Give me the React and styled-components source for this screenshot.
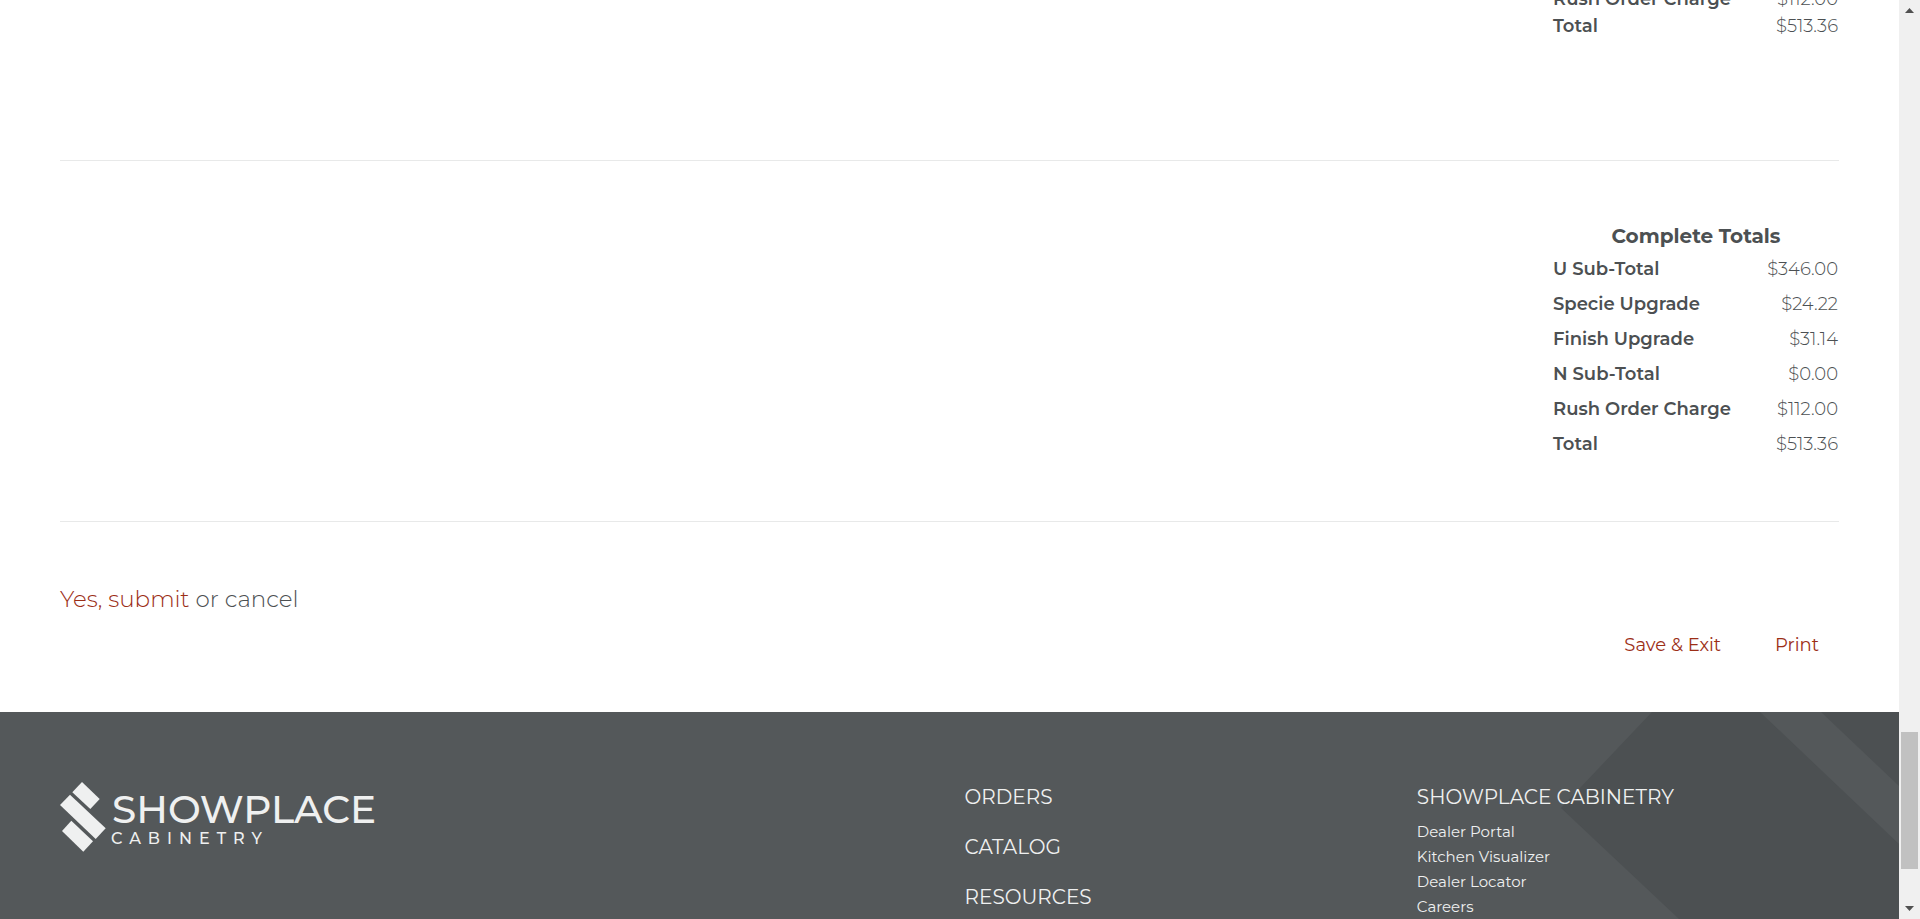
import styled, { createGlobalStyle } from 'styled-components';

const GlobalStyle = createGlobalStyle`
  * {
    box-sizing: border-box;
  }

  body {
    margin: 0;
    background: #fff;
    color: #4c5052;
    font-family: Montserrat, Inter, 'Open Sans', sans-serif;
    font-size: 18px;
    font-weight: 300;
  }

  a {
    color: inherit;
    text-decoration: none;
  }
`;

const Screen = styled.div`
  display: grid;
  grid-template-columns: 1fr 21px;
  height: 100vh;
  overflow: hidden;
`;

const Page = styled.div`
  display: flex;
  flex-direction: column;
  min-width: 0;
  overflow: hidden;
`;

const Main = styled.main`
  padding: 0 60px 55px;
`;

const Section = styled.section`
  display: flex;
  justify-content: flex-end;
  padding: 60px 0 59px;
  border-bottom: 1px solid #e8e9e9;
`;

// the order page is scrolled down, so the first totals start above the fold
const OrderSection = styled(Section)`
  margin-top: -14px;
  padding: 0 0 120px;
`;

const TotalsTable = styled.table`
  width: 286px;
  border-collapse: collapse;

  caption {
    padding-bottom: 1px;
    font-size: 20px;
    font-weight: 700;
    line-height: 30px;
  }

  th,
  td {
    padding: 0;
    line-height: ${({ $rowHeight }) => $rowHeight}px;
  }

  th {
    font-weight: 600;
    text-align: left;
  }

  td {
    padding-right: 1px;
    text-align: right;
  }
`;

const Confirm = styled.p`
  margin: 60px 0 17px;
  font-size: 23px;
  line-height: 34px;
`;

const SubmitLink = styled.a`
  && {
    color: #9c2e16;
  }
`;

const Actions = styled.div`
  display: flex;
  justify-content: flex-end;
  gap: 54px;
  padding-right: 20px;
`;

const TextButton = styled.button`
  padding: 0;
  border: 0;
  background: none;
  color: #9c2e16;
  font: inherit;
  font-weight: 400;
  line-height: 24px;
  cursor: pointer;

  &:hover {
    text-decoration: underline;
  }
`;

const FooterBar = styled.footer`
  position: relative;
  flex: 1 0 auto;
  background: #54585a;
  color: #eff0f0;
  font-weight: 400;
`;

const FooterPattern = styled.svg`
  position: absolute;
  top: 0;
  right: 0;
`;

const FooterGrid = styled.div`
  position: relative;
  display: grid;
  grid-template-columns: 60fr 30fr 28fr;
  padding: 70px 60px 0;
`;

const FooterNav = styled.nav`
  display: flex;
  flex-direction: column;
  align-items: flex-start;
  gap: 20px;
  font-size: 20px;
  line-height: 30px;
`;

const FooterHeading = styled.h2`
  margin: 0 0 7px;
  font-size: 20px;
  font-weight: 400;
  line-height: 30px;
`;

const LinkList = styled.ul`
  margin: 0;
  padding: 0;
  list-style: none;
  font-size: 15px;
  line-height: 25px;
`;

const ScrollBar = styled.div`
  display: grid;
  grid-template-rows: 21px 711fr 137fr 29fr 21px;
  background: #f0f0f0;
`;

const ScrollThumb = styled.div`
  grid-row: 3;
  margin: 0 2px;
  background: #c1c1c1;
`;

const ScrollArrow = styled.button`
  grid-row: ${({ $row }) => $row};
  display: flex;
  align-items: center;
  justify-content: center;
  padding: 0;
  border: 0;
  background: none;
`;

const orderTotals = [
  ['Rush Order Charge', '$112.00'],
  ['Total', '$513.36'],
];

const completeTotals = [
  ['U Sub-Total', '$346.00'],
  ['Specie Upgrade', '$24.22'],
  ['Finish Upgrade', '$31.14'],
  ['N Sub-Total', '$0.00'],
  ['Rush Order Charge', '$112.00'],
  ['Total', '$513.36'],
];

const footerNav = ['ORDERS', 'CATALOG', 'RESOURCES'];
const companyLinks = ['Dealer Portal', 'Kitchen Visualizer', 'Dealer Locator', 'Careers'];

function Totals({ title, rows, rowHeight }) {
  return (
    <TotalsTable $rowHeight={rowHeight}>
      {title && <caption>{title}</caption>}
      <tbody>
        {rows.map(([label, amount]) => (
          <tr key={label}>
            <th scope="row">{label}</th>
            <td>{amount}</td>
          </tr>
        ))}
      </tbody>
    </TotalsTable>
  );
}

function Logo() {
  return (
    <svg width="320" height="70" viewBox="0 0 320 70" fill="#eff0f0" role="img" aria-label="Showplace Cabinetry">
      <path d="M22 0 39.7 17 30.3 27 12.3 10.3Z" />
      <path d="M10 12.7 45.7 46.3 35.7 57 0 23Z" />
      <path d="M11.3 38.7 33 59.3 23.3 69.7 2 49Z" />
      <text x="52" y="41" fontSize="39" fontWeight="500">SHOWPLACE</text>
      <text x="51" y="62" fontSize="16" fontWeight="500" letterSpacing="7">CABINETRY</text>
    </svg>
  );
}

function Footer() {
  return (
    <FooterBar>
      <FooterPattern width="338" height="207" viewBox="0 0 338 207" fill="#4c5052" aria-hidden="true">
        <path d="M91 0H199L338 132V207H118L0 96Z" />
        <path d="M260 0H338V74Z" />
      </FooterPattern>
      <FooterGrid>
        <a href="#home"><Logo /></a>
        <FooterNav>
          {footerNav.map(item => (
            <a key={item} href={`#${item.toLowerCase()}`}>{item}</a>
          ))}
        </FooterNav>
        <div>
          <FooterHeading>SHOWPLACE CABINETRY</FooterHeading>
          <LinkList>
            {companyLinks.map(item => (
              <li key={item}><a href="#company">{item}</a></li>
            ))}
          </LinkList>
        </div>
      </FooterGrid>
    </FooterBar>
  );
}

export default function App() {
  return (
    <>
      <GlobalStyle />
      <Screen>
        <Page>
          <Main>
            <OrderSection>
              <Totals rows={orderTotals} rowHeight={27} />
            </OrderSection>
            <Section>
              <Totals title="Complete Totals" rows={completeTotals} rowHeight={35} />
            </Section>
            <Confirm>
              <SubmitLink href="#submit">Yes, submit</SubmitLink> or <a href="#cancel">cancel</a>
            </Confirm>
            <Actions>
              <TextButton type="button">Save &amp; Exit</TextButton>
              <TextButton type="button">Print</TextButton>
            </Actions>
          </Main>
          <Footer />
        </Page>
        <ScrollBar>
          <ScrollArrow type="button" $row={1} aria-label="Scroll up">
            <svg width="9" height="5" viewBox="0 0 9 5" fill="#505050"><path d="M4.5 0 9 5H0Z" /></svg>
          </ScrollArrow>
          <ScrollThumb />
          <ScrollArrow type="button" $row={5} aria-label="Scroll down">
            <svg width="9" height="5" viewBox="0 0 9 5" fill="#505050"><path d="M0 0H9L4.5 5Z" /></svg>
          </ScrollArrow>
        </ScrollBar>
      </Screen>
    </>
  );
}
